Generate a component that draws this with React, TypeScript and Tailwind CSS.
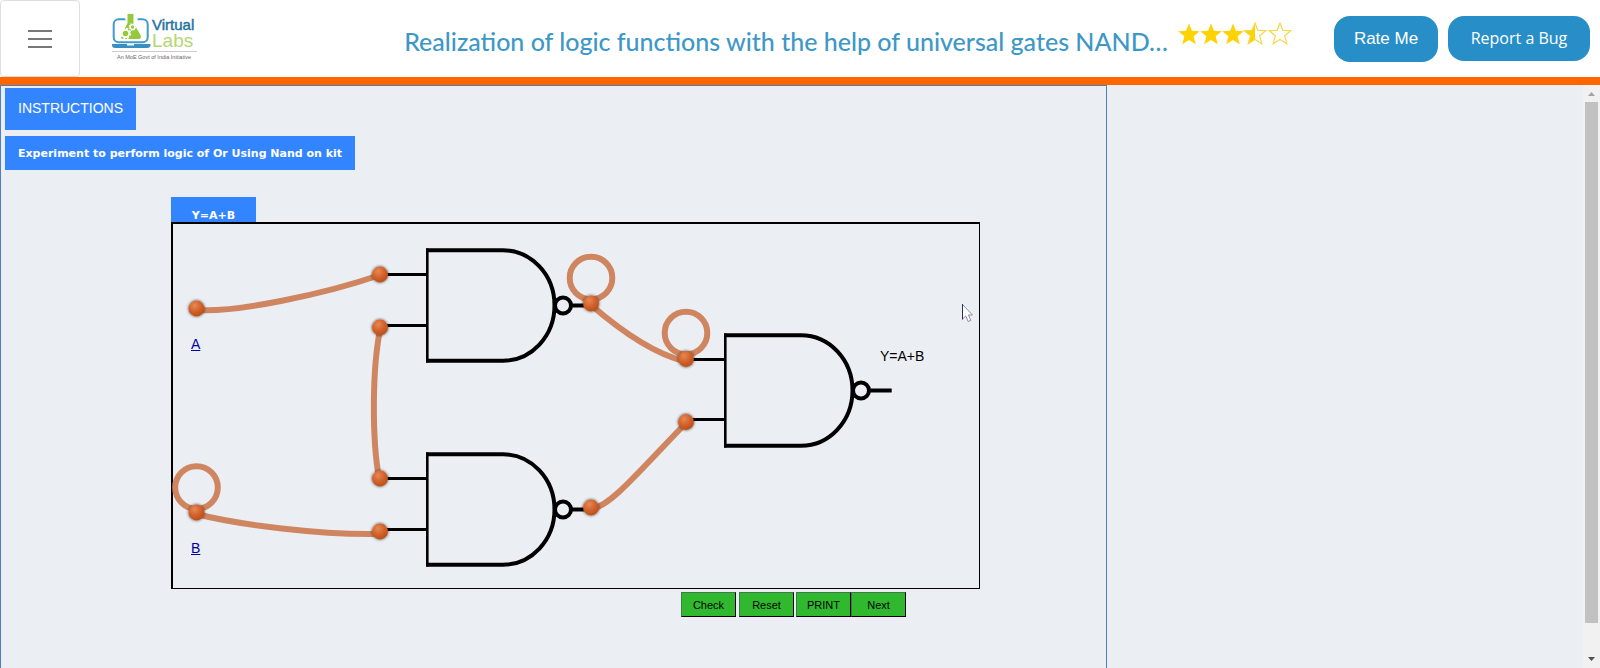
import React from "react";

type Point = [number, number];

const terminals: Point[] = [
  [196.5, 308.5], [380, 274.5], [380, 327.5], [380, 478.5], [380, 531.5],
  [196.5, 512.5], [591, 303.5], [686, 359], [686, 422], [591, 507.5],
];

const wires = [
  "M197 310C235 313 325 294 380 275",
  "M380 330C372 370 372 440 379 478",
  "M196 514C240 525 320 535 378 534",
  "M591 305C620 330 655 354 684 361",
  "M592 509C612 505 640 470 686 423",
];

const loops: Point[] = [[196.5, 487.5], [591, 278], [686, 333]];

const inputs: [number, number, number][] = [
  [388, 426, 274.5], [388, 426, 325.5], [388, 426, 478.5],
  [388, 426, 529.5], [694, 724, 359.5], [694, 724, 419.5],
];

const STAR = "M11 0.5L13.9 7.8L21.8 8.2L15.6 13.3L17.8 21.2L11 16.9L4.2 21.2L6.4 13.3L0.2 8.2L8.1 7.8Z";

function Logo() {
  return (
    <svg viewBox="0 0 88 50" className="h-[50px] w-[88px]" role="img" aria-label="Virtual Labs">
      <rect x="2.7" y="7.2" width="34" height="23" rx="5" fill="none" stroke="#3f9ccb" strokeWidth="2" />
      <path d="M14 5H27L26 12L31 20V27H10V24L15 12Z" fill="#fff" />
      <path d="M16.5 2H22.5V11L29.500 23Q31 27 27.500 27H12.500Q8.500 27 10.500 23L16.500 11Z" fill="#95c93d" />
      <circle cx="14.500" cy="21.500" r="4.800" fill="none" stroke="#fff" strokeWidth="1.800" strokeDasharray="2 1.770" />
      <circle cx="14.500" cy="21.500" r="3.600" fill="#95c93d" stroke="#fff" strokeWidth="1.700" />
      <circle cx="21.500" cy="15" r="3.200" fill="none" stroke="#fff" strokeWidth="1.200" strokeDasharray="1.400 1.113" />
      <circle cx="21.500" cy="15" r="2.300" fill="#95c93d" stroke="#fff" strokeWidth="1.300" />
      <path d="M1 32H16V33.500H23V32H39.500V34Q39 36 36 36H4Q1 36 1 33Z" fill="#3a8fc2" />
      <text x="41" y="18" fontFamily="'Liberation Sans'" fontSize="15" fill="#2574a0" stroke="#2574a0" strokeWidth="0.5">Virtual</text>
      <text x="41" y="35" fontFamily="'Liberation Sans'" fontSize="19" fill="#b3d775">Labs</text>
      <path d="M1 39.500H86" stroke="#ccc" />
      <text x="6" y="47" fontFamily="'Liberation Sans'" fontSize="5.500" fill="#666">An MoE Govt of India Initiative</text>
    </svg>
  );
}

function Rating() {
  return (
    <svg viewBox="0 0 115 23" className="mb-[10px] ml-[10px] h-[23px] w-[115px] shrink-0" role="img" aria-label="3.5 out of 5 stars">
      <g fill="#ffd203">
        <path d={STAR} transform="translate(0 1)" />
        <path d={STAR} transform="translate(22 1)" />
        <path d={STAR} transform="translate(44 1)" />
        <path d="M77 1V17.400L70.200 21.700L72.400 13.800L66.200 8.700L74.100 8.300Z" />
      </g>
      <g fill="none" stroke="#f8d648" strokeWidth="1.200">
        <path d={STAR} transform="translate(66 0.500)" />
        <path d={STAR} transform="translate(91 0.500)" />
      </g>
    </svg>
  );
}

function Gate({ x, y }: { x: number; y: number }) {
  return (
    <g transform={`translate(${x} ${y})`} fill="none" stroke="#000" strokeWidth="4">
      <path d="M0 -55.200H77A51.500 55.200 0 0 1 77 55.200H0" />
      <path d="M1.300 -57V57" strokeWidth="2.600" />
      <circle cx="137" cy="0" r="8" />
      <path d="M145.500 0H167.700" />
    </g>
  );
}

function Circuit() {
  return (
    <svg viewBox="173 224 806 364" className="block h-[364px] w-[806px] overflow-visible" aria-hidden="true">
      <defs>
        <radialGradient id="ball" cx="0.38" cy="0.3" r="0.7">
          <stop offset="0" stopColor="#e88852" />
          <stop offset="0.6" stopColor="#d0602a" />
          <stop offset="1" stopColor="#bd5118" />
        </radialGradient>
        <filter id="shade" x="-50%" y="-50%" width="200%" height="200%">
          <feDropShadow dx="0" dy="0" stdDeviation="1.500" floodColor="#000" floodOpacity="0.75" />
        </filter>
      </defs>
      <Gate x={426} y={305.5} />
      <Gate x={426} y={509.5} />
      <Gate x={724} y={390.5} />
      {inputs.map(([a, b, y]) => (
        <path key={`${a}-${y}`} d={`M${a - 3} ${y}H${b}`} stroke="#000" strokeWidth="3" />
      ))}
      <g fill="none" stroke="#cf8660" strokeWidth="6">
        {wires.map((d) => <path key={d} d={d} />)}
        {loops.map(([x, y]) => <circle key={`${x}`} cx={x} cy={y} r="21.300" />)}
      </g>
      {terminals.map(([x, y]) => (
        <circle key={`${x}-${y}`} cx={x} cy={y} r="7.900" fill="url(#ball)" filter="url(#shade)" />
      ))}
      <path d="M962.500 304.500V319L965.800 316L968.200 321.500L970.800 320.400L968.400 315H972.500Z" fill="#fff" stroke="#8a8fa0" />
      <path d="M962.500 304V319.500" stroke="#2c3050" />
    </svg>
  );
}

const action = "h-[25px] w-[55px] border border-t-[#3f7a4c] border-l-[#3f7a4c] border-r-black border-b-black bg-[#30b92e] pt-px text-[11px] text-black";

export default function App() {
  return (
    <div className="flex h-screen flex-col overflow-hidden bg-[#ebeef3] font-['Liberation_Sans',sans-serif]">
      <header className="flex shrink-0 items-center border-b-8 border-[#ff6600] bg-white">
        <button aria-label="Menu" className="flex h-[77px] w-20 flex-col items-center justify-center gap-[6px] rounded border border-[#dedede]">
          <span className="h-[2px] w-6 bg-[#777]" />
          <span className="h-[2px] w-6 bg-[#777]" />
          <span className="h-[2px] w-6 bg-[#777]" />
        </button>
        <a href="#" className="ml-[31px] shrink-0 pb-1"><Logo /></a>
        <h1 className="ml-4 min-w-0 flex-1 truncate pt-1 text-right font-['Lato',sans-serif] text-[25px] leading-8 font-medium text-[#3e98c7]">
          Realization of logic functions with the help of universal gates NAND…
        </h1>
        <Rating />
        <div className="mr-[10px] ml-[41px] flex shrink-0 gap-[10px]">
          <button className="h-[46px] w-[104px] rounded-2xl bg-[#288ec8] text-[17px] text-white">Rate Me</button>
          <button className="h-[45px] w-[142px] rounded-2xl bg-[#288ec8] font-['Open_Sans',sans-serif] text-[16px] text-white">Report a Bug</button>
        </div>
      </header>
      <div className="flex min-h-0 flex-1">
        <main className="w-[70%] max-w-[1107px] border border-b-0 border-[#4a80c0] pt-[2px] pl-1">
          <button className="block h-[42px] bg-[#3385ff] px-[13px] pb-[2px] text-[14px] text-white">INSTRUCTIONS</button>
          <h2 className="mt-[6px] flex h-[34px] w-fit items-center bg-[#3385ff] px-[13px] pt-[2px] font-['DejaVu_Sans',sans-serif] text-[11px] font-bold text-white">
            Experiment to perform logic of Or Using Nand on kit
          </h2>
          <section className="mt-[27px] ml-[166px] w-[809px]">
            <h3 className="flex h-[25px] w-[85px] items-end justify-center bg-[#3385ff] font-['DejaVu_Sans',sans-serif] text-[11px] leading-[13px] font-bold text-white">Y=A+B</h3>
            <div className="relative border border-t-2 border-l-2 border-black text-[14px] leading-4">
              <Circuit />
              <a href="#a" className="absolute top-[112px] left-[18px] text-[#0000a0] underline">A</a>
              <a href="#b" className="absolute top-[316px] left-[18px] text-[#0000a0] underline">B</a>
              <span className="absolute top-[124px] left-[707px]">Y=A+B</span>
            </div>
            <div className="mt-[3px] flex justify-end pr-[74px]">
              <button className={action}>Check</button>
              <button className={`ml-[3px] ${action}`}>Reset</button>
              <button className={`ml-[2px] ${action}`}>PRINT</button>
              <button className={action}>Next</button>
            </div>
          </section>
        </main>
        <div className="ml-auto flex w-[17px] flex-col items-center bg-[#f1f1f1]" aria-hidden="true">
          <svg viewBox="0 0 17 17" className="h-[17px] w-[17px]"><path d="M5 11L8.500 7L12 11Z" fill="#a3a3a3" /></svg>
          <div className="w-[13px] flex-1 pb-[28px]"><div className="h-full bg-[#c1c1c1]" /></div>
          <svg viewBox="0 0 17 17" className="h-[17px] w-[17px]"><path d="M5 6L8.500 10L12 6Z" fill="#505050" /></svg>
        </div>
      </div>
    </div>
  );
}
